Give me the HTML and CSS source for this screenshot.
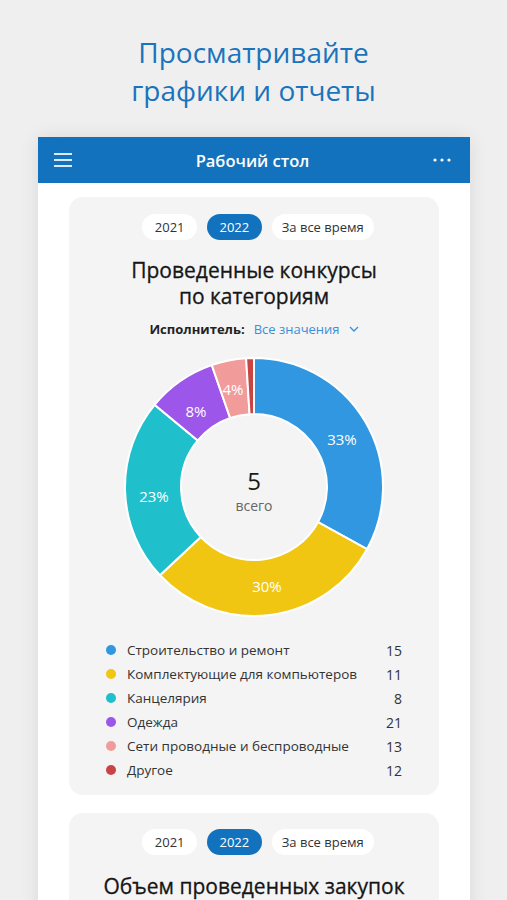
FILE: index.html
```html
<!DOCTYPE html>
<html lang="ru">

<head>
  <meta charset="UTF-8">
  <meta name="viewport" content="width=device-width, initial-scale=1.0">
  <title>Рабочий стол - графики и отчеты</title>
  <link rel="stylesheet" href="styles.css">
</head>

<body>
  <h1 class="promo">Просматривайте<br>графики и отчеты</h1>

  <div class="phone">
    <header class="appbar">
      <svg class="appbar-icon" width="18" height="16" viewBox="0 0 18 16">
        <path d="M0 2h18M0 8h18M0 14h18" stroke="#fff" stroke-width="2" opacity="0.85" />
      </svg>
      <span class="appbar-title">Рабочий стол</span>
      <svg class="appbar-icon" width="18" height="4" viewBox="0 0 18 4">
        <circle cx="2" cy="2" r="1.6" fill="#fff" />
        <circle cx="9" cy="2" r="1.6" fill="#fff" />
        <circle cx="16" cy="2" r="1.6" fill="#fff" />
      </svg>
    </header>

    <main class="screen">
      <section class="card">
        <div class="periods">
          <button class="pill">2021</button>
          <button class="pill active">2022</button>
          <button class="pill">За все время</button>
        </div>
        <h2 class="card-title">Проведенные конкурсы<br>по категориям</h2>
        <div class="filter">
          <strong>Исполнитель:</strong>
          <span class="filter-value">Все значения
            <svg width="10" height="6" viewBox="0 0 10 6">
              <path d="M1 1l4 4 4-4" fill="none" stroke="#3b8ed8" stroke-width="1.3" />
            </svg>
          </span>
        </div>

        <svg class="donut" width="260" height="260" viewBox="0 0 260 260">
          <g stroke="#fff" stroke-width="2">
            <path fill="#3097e0" d="M130,1 A129,129 0 0 1 243.04,192.15 L193.97,165.17 A73,73 0 0 0 130,57 Z" />
            <path fill="#f1c613" d="M243.04,192.15 A129,129 0 0 1 35.96,218.30 L76.78,179.97 A73,73 0 0 0 193.97,165.17 Z" />
            <path fill="#1fc0cc" d="M35.96,218.30 A129,129 0 0 1 30.61,47.78 L73.75,83.47 A73,73 0 0 0 76.78,179.97 Z" />
            <path fill="#9c56ea" d="M30.61,47.78 A129,129 0 0 1 87.79,8.09 L106.11,61.01 A73,73 0 0 0 73.75,83.47 Z" />
            <path fill="#f19b9b" d="M87.79,8.09 A129,129 0 0 1 122.12,1.24 L125.54,57.14 A73,73 0 0 0 106.11,61.01 Z" />
            <path fill="#c94545" d="M122.12,1.24 A129,129 0 0 1 130,1 L130,57 A73,73 0 0 0 125.54,57.14 Z" />
          </g>
          <g class="donut-labels">
            <text x="218" y="82">33%</text>
            <text x="143" y="229">30%</text>
            <text x="30" y="139">23%</text>
            <text x="72" y="54">8%</text>
            <text x="109" y="32">4%</text>
          </g>
          <text class="donut-total" x="130" y="123">5</text>
          <text class="donut-caption" x="130" y="148">всего</text>
        </svg>

        <ul class="legend">
          <li><i style="background:#3097e0"></i><span>Строительство и ремонт</span><b>15</b></li>
          <li><i style="background:#f1c613"></i><span>Комплектующие для компьютеров</span><b>11</b></li>
          <li><i style="background:#1fc0cc"></i><span>Канцелярия</span><b>8</b></li>
          <li><i style="background:#9c56ea"></i><span>Одежда</span><b>21</b></li>
          <li><i style="background:#f19b9b"></i><span>Сети проводные и беспроводные</span><b>13</b></li>
          <li><i style="background:#c94545"></i><span>Другое</span><b>12</b></li>
        </ul>
      </section>

      <section class="card">
        <div class="periods">
          <button class="pill">2021</button>
          <button class="pill active">2022</button>
          <button class="pill">За все время</button>
        </div>
        <h2 class="card-title">Объем проведенных закупок</h2>
      </section>
    </main>
  </div>
</body>

</html>
```

FILE: styles.css
```css
* {
  box-sizing: border-box;
  margin: 0;
  padding: 0;
  font-family: 'Open Sans', 'Noto Sans', sans-serif;
}

body {
  background: #efefef;
  height: 900px;
  overflow: hidden;
}

.promo {
  padding-top: 33px;
  text-align: center;
  font-size: 28px;
  line-height: 38px;
  font-weight: 400;
  color: #1a74bd;
}

.phone {
  margin: 28px 37px 0 38px;
  background: #fff;
  box-shadow: 0 0 18px rgba(0, 0, 0, 0.09);
  height: 800px;
}

.appbar {
  display: flex;
  align-items: center;
  justify-content: space-between;
  height: 46px;
  padding: 0 19px 0 16px;
  background: #1272bd;
  color: #fff;
}

.appbar-title {
  font-size: 16.5px;
  font-weight: 600;
}

.screen {
  display: flex;
  flex-direction: column;
  gap: 18px;
  padding: 14px 31px 0;
}

.card {
  background: #f4f4f4;
  border-radius: 14px;
  padding: 17px 37px 13px;
  display: flex;
  flex-direction: column;
  align-items: center;
}

.card + .card {
  padding: 16px 20px 13px;
}

.periods {
  display: flex;
  gap: 10px;
  margin-left: 8px;
}

.pill {
  height: 26px;
  padding: 0 12.5px;
  border: none;
  border-radius: 13px;
  background: #fff;
  color: #333;
  font-size: 13px;
}

.pill:last-child {
  padding: 0 10px;
}

.pill.active {
  background: #1272bd;
  color: #fff;
}

.card-title {
  margin-top: 17px;
  text-align: center;
  white-space: nowrap;
  font-size: 21px;
  line-height: 26px;
  font-weight: 500;
  color: #161616;
  -webkit-text-stroke: 0.3px #161616;
}

.card + .card .card-title {
  margin-top: 18px;
}

.filter {
  margin-top: 10px;
  display: flex;
  align-items: center;
  gap: 9px;
  font-size: 13px;
  line-height: 20px;
  color: #222;
}

.filter strong {
  font-weight: 700;
}

.filter-value {
  color: #3b8ed8;
  display: flex;
  align-items: center;
  gap: 9px;
}

.donut {
  margin-top: 18px;
  display: block;
}

.donut-labels text {
  fill: #fff;
  font-size: 15px;
  text-anchor: middle;
  dominant-baseline: central;
}

.donut-total {
  fill: #1a1a1a;
  font-size: 24px;
  text-anchor: middle;
  dominant-baseline: central;
}

.donut-caption {
  fill: #666;
  font-size: 14px;
  text-anchor: middle;
  dominant-baseline: central;
}

.legend {
  list-style: none;
  margin-top: 21px;
  align-self: stretch;
}

.legend li {
  display: flex;
  align-items: center;
  height: 24px;
  font-size: 13.5px;
  color: #333;
}

.legend i {
  width: 10px;
  height: 10px;
  border-radius: 50%;
  margin-right: 11px;
}

.legend span {
  flex: 1;
}

.legend b {
  font-size: 14px;
  font-weight: 500;
}
```
